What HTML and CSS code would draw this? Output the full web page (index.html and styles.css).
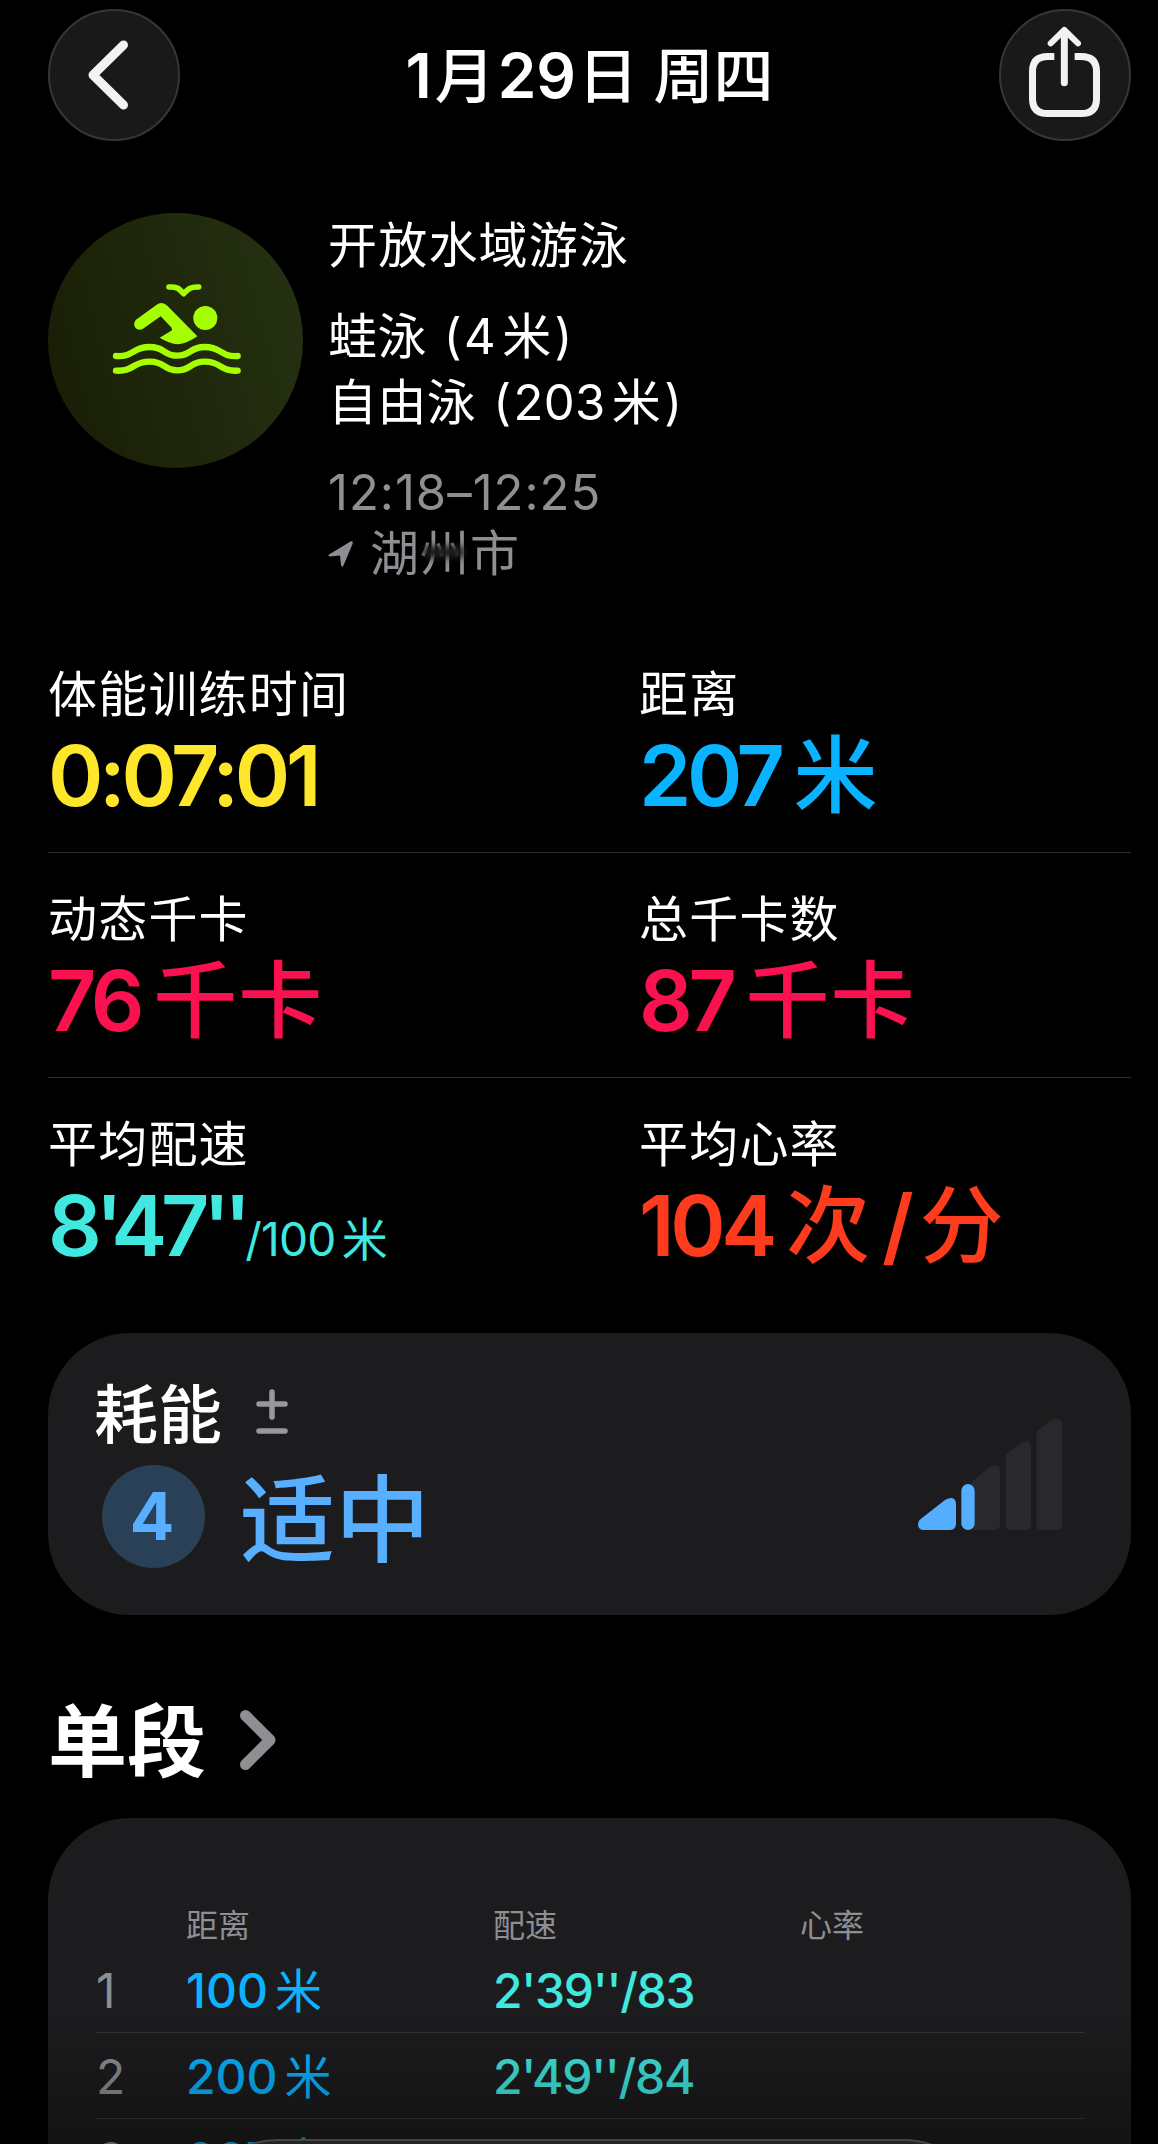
FILE: index.html
```html
<!DOCTYPE html>
<html lang="zh-CN">
<head>
  <meta charset="UTF-8">
  <title>体能训练</title>
  <meta name="viewport" content="width=device-width, initial-scale=1.0">
  <link rel="stylesheet" href="styles.css">
</head>
<body>
  <header class="topbar">
    <button class="round-btn" aria-label="返回">
      <svg viewBox="0 0 132 132"><path d="M75.500 36 L45 66 L75.500 96" stroke-width="9"/></svg>
    </button>
    <h1>1<span class="month">月</span>29<span class="day">日</span> <span>周四</span></h1>
    <button class="round-btn" aria-label="共享">
      <svg viewBox="117 27 396 396">
        <path class="butt" d="M283 169.500 H264 Q217.500 169.500 217.500 214 V296 Q217.500 340.500 264 340.500 H363 Q409.500 340.500 409.500 296 V214 Q409.500 169.500 363 169.500 H344" stroke-width="21"/>
        <path d="M313 95 V248" stroke-width="21"/>
        <path d="M272 130 L313 90 L354 130" stroke-width="18"/>
      </svg>
    </button>
  </header>

  <section class="summary">
    <div class="activity-icon">
      <svg viewBox="-126 -141 765 765">
        <!-- bird -->
        <path class="line" d="M237 81 C262 80 266 85 281 101 C296 85 302 80 326 81" stroke-width="17"/>
        <!-- swimmer -->
        <circle cx="346" cy="174" r="36"/>
        <path d="M138 179 L199 135 Q216 122 232 137 L322 229 Q291 251 264 253 Q238 251 209 233 L246 211 L245 203 L212 169 L158 207 C142 216 123 196 138 179 Z"/>
        <!-- waves -->
        <path class="line" d="M78 288 C135 291 125 261 179 261 C226 261 220 287 261 287 C306 287 297 261 344 261 C397 261 388 291 443 288" stroke-width="19"/>
        <path class="line" d="M78 332 C135 335 125 305 179 305 C226 305 220 331 261 331 C306 331 297 305 344 305 C397 305 388 335 443 332" stroke-width="19"/>
      </svg>
    </div>
    <div class="summary-text">
      <p class="kind">开放水域游泳</p>
      <p class="stroke">蛙泳<span class="paren">(</span>4<span class="unit">米</span><span class="close">)</span></p>
      <p class="stroke">自由泳<span class="paren">(</span>203<span class="unit">米</span><span class="close">)</span></p>
      <p class="time">12:18–12:25</p>
      <p class="place">
        <svg viewBox="0 0 24 26"><path d="M0.500 13.500 L22 0.500 Q25 -0.500 24 3 L15 24.500 Q13.500 27 12.500 24 L11.500 14.500 L1.500 15.500 Q-1 15 0.500 13.500 Z"/></svg>
        <span>湖<span class="worn">州</span>市</span>
      </p>
    </div>
  </section>

  <section class="stats">
    <div class="stat-row">
      <div class="stat"><h3>体能训练时间</h3><p class="value yellow">0:07:01</p></div>
      <div class="stat"><h3>距离</h3><p class="value blue">207<span class="cjk">米</span></p></div>
    </div>
    <div class="stat-row">
      <div class="stat"><h3>动态千卡</h3><p class="value pink">76<span class="cjk">千卡</span></p></div>
      <div class="stat"><h3>总千卡数</h3><p class="value pink">87<span class="cjk">千卡</span></p></div>
    </div>
    <div class="stat-row">
      <div class="stat"><h3>平均配速</h3><p class="value pace cyan">8'47''<span class="per">/100<span class="unit">米</span></span></p></div>
      <div class="stat"><h3>平均心率</h3><p class="value red">104<span class="cjk">次</span><span class="slash">/</span><span class="cjk">分</span></p></div>
    </div>
  </section>

  <section class="card effort">
    <div>
      <div class="effort-head">
        <h3>耗能</h3>
        <svg viewBox="0 0 32 45"><path d="M3 15 H29 M16 3 V28 M3 42 H29"/></svg>
      </div>
      <div class="effort-level">
        <span class="badge">4</span>
        <strong>适中</strong>
      </div>
    </div>
    <svg class="effort-chart" viewBox="174 117 432 333">
      <g class="off">
        <path d="M335 305 L388 262 Q420 245 420 275 V435 Q420 450 405 450 H335 Z"/>
        <path d="M437 232 Q437 224 444 219 L482 190 Q513 174 513 205 V435 Q513 450 498 450 H452 Q437 450 437 435 Z"/>
        <path d="M530 160 Q530 153 537 148 L574 121 Q606 106 606 135 V435 Q606 450 591 450 H545 Q530 450 530 435 Z"/>
      </g>
      <g class="on">
        <path d="M182 417 L256 359 Q288 344 288 374 V430 Q288 450 268 450 H192 Q174 450 174 432 Q174 423 182 417 Z"/>
        <rect x="304" y="312" width="40" height="138" rx="20"/>
      </g>
    </svg>
  </section>

  <h2 class="section-title"><span>单段</span>
    <svg viewBox="0 0 36 60"><path d="M5.500 5.500 L30 30 L5.500 54.500"/></svg>
  </h2>

  <section class="card splits">
    <div class="split head"><span></span><span>距离</span><span>配速</span><span>心率</span></div>
    <div class="split"><span class="num">1</span><span class="blue">100<span class="unit">米</span></span><span class="cyan">2'39''/83</span><span></span></div>
    <div class="split"><span class="num">2</span><span class="blue">200<span class="unit">米</span></span><span class="cyan">2'49''/84</span><span></span></div>
    <div class="split last"><span class="num">3</span><span class="blue">207<span class="unit">米</span></span><span></span><span></span></div>
  </section>

  <div class="fade"></div>
  <nav class="tabbar"></nav>
</body>
</html>
```
FILE: styles.css
```css
:root {
  --card: #1c1c1e;
  --gray: #8e8e93;
  --line: #2b2b2d;
  --lime: #a6ff00;
  --yellow: #fee62b;
  --blue: #0ab3ff;
  --pink: #fa114f;
  --cyan: #40e8e0;
  --red: #ff3b1d;
  --effort: #58aeff;
}

* {
  box-sizing: border-box;
}

html {
  height: 2144px;
  overflow: hidden;
  background: #000;
}

body {
  margin: 0;
  height: 2144px;
  padding: 9px 27px 0 48px;
  overflow: hidden;
  position: relative;
  background: #000;
  color: #fff;
  font-family: Inter, "Noto Sans CJK SC", sans-serif;
}

h1, h2, h3, p {
  margin: 0;
}

svg {
  display: block;
}

.topbar {
  display: flex;
  justify-content: space-between;
  height: 132px;
}

.topbar h1 {
  font-size: 62px;
  font-weight: 600;
  line-height: 133px;
  white-space: nowrap;
}

.topbar h1 span {
  font-size: 60px;
  font-weight: 500;
}

.topbar h1 .month {
  margin: 0 3px;
}

.topbar h1 .day {
  margin-left: 2px;
}

.round-btn {
  width: 132px;
  height: 132px;
  padding: 0;
  border: 2px solid #363636;
  border-radius: 50%;
  background: #191919;
}

.round-btn svg {
  width: 132px;
  height: 132px;
  margin: -2px;
  fill: none;
  stroke: #f2f2f2;
  stroke-linecap: round;
  stroke-linejoin: round;
}

.round-btn .butt {
  stroke-linecap: butt;
}

.summary {
  display: flex;
  gap: 25px;
  height: 487px;
  padding-top: 72px;
}

.activity-icon {
  width: 255px;
  height: 255px;
  border-radius: 50%;
  background: linear-gradient(75deg, #181d04, #263213);
}

.activity-icon svg {
  fill: var(--lime);
}

.activity-icon .line {
  fill: none;
  stroke: var(--lime);
  stroke-linecap: round;
  stroke-linejoin: round;
}

.summary-text {
  font-size: 49px;
  line-height: 66px;
  white-space: nowrap;
}

.kind {
  letter-spacing: 1.2px;
  margin-bottom: 25px;
}

.unit {
  margin-left: 6px;
}

.stroke {
  letter-spacing: 0.4px;
}

.paren {
  margin: 0 2px 0 17px;
}

.close {
  margin-left: 3px;
}

.time, .place {
  color: var(--gray);
  line-height: 61px;
}

.time {
  margin-top: 26px;
  letter-spacing: 1px;
}

.place {
  display: flex;
  align-items: center;
  gap: 17px;
  letter-spacing: 1px;
}

.place svg {
  width: 25px;
  height: 26px;
  fill: var(--gray);
}

.worn {
  position: relative;
}

.worn::after {
  content: "";
  position: absolute;
  left: 4px;
  top: 22px;
  width: 40px;
  height: 12px;
  background: #1c1c1d;
  filter: blur(3px);
}

.stat-row {
  display: flex;
  height: 225px;
  padding-top: 37px;
  border-bottom: 1px solid var(--line);
}

.stat-row:last-child {
  border: 0;
}

.stat {
  width: 591px;
  white-space: nowrap;
}

.stat:last-child {
  width: auto;
}

.stat h3 {
  font-size: 49px;
  font-weight: 400;
  line-height: 60px;
  letter-spacing: 1.2px;
}

.value {
  margin-top: 5px;
  font-size: 84px;
  font-weight: 600;
  line-height: 92px;
  letter-spacing: -4.3px;
}

.value.pace {
  letter-spacing: -6.3px;
}

.cjk {
  margin-left: 13px;
  font-weight: 500;
  letter-spacing: 1px;
}

.per {
  font-size: 46px;
  font-weight: 400;
  letter-spacing: -0.7px;
}

.slash {
  margin-left: 11px;
}

.slash + .cjk {
  margin-left: 10px;
}

.yellow { color: var(--yellow); }
.blue { color: var(--blue); }
.pink { color: var(--pink); }
.cyan { color: var(--cyan); }
.red { color: var(--red); }

.card {
  width: 1083px;
  border-radius: 82px;
  background: var(--card);
}

.effort {
  display: flex;
  justify-content: space-between;
  height: 282px;
  margin-top: 30px;
  padding: 46px 69px 0 46px;
}

.effort-head {
  display: flex;
  gap: 34px;
  height: 70px;
}

.effort-head h3 {
  font-size: 64px;
  font-weight: 450;
  line-height: 71px;
}

.effort-head svg {
  width: 32px;
  height: 45px;
  margin-top: 10px;
  fill: none;
  stroke: #98979e;
  stroke-width: 5.5;
  stroke-linecap: round;
}

.effort-level {
  display: flex;
  gap: 35px;
  margin: 16px 0 0 8px;
  color: var(--effort);
}

.badge {
  width: 103px;
  height: 103px;
  padding-right: 3px;
  border-radius: 50%;
  background: #2a4056;
  font-size: 66px;
  font-weight: 700;
  line-height: 103px;
  text-align: center;
}

.effort-level strong {
  font-size: 95px;
  font-weight: 500;
  line-height: 111px;
}

.effort-chart {
  width: 144px;
  height: 111px;
  margin-top: 40px;
}

.effort-chart .off { fill: #29292c; }
.effort-chart .on { fill: #54adff; }

.section-title {
  display: flex;
  align-items: center;
  gap: 34px;
  height: 90px;
  margin: 80px 0 33px;
  font-size: 79px;
  font-weight: 700;
  line-height: 90px;
}

.section-title span {
  padding-top: 4px;
}

.section-title svg {
  width: 36px;
  height: 60px;
  fill: none;
  stroke: var(--gray);
  stroke-width: 11;
  stroke-linecap: round;
  stroke-linejoin: round;
}

.splits {
  height: 326px;
  padding: 85px 47px 0 48px;
  border-radius: 82px 82px 0 0;
}

.split {
  display: grid;
  grid-template-columns: 90px 307px 307px 1fr;
  height: 86px;
  border-bottom: 1px solid #363638;
  font-size: 48px;
  line-height: 88px;
}

.split.head {
  height: 44px;
  border: 0;
  color: var(--gray);
  font-size: 32px;
  line-height: 46px;
}

.split.last {
  border: 0;
  line-height: 82px;
}

.split .num {
  color: var(--gray);
}

.split .blue, .split .cyan {
  font-weight: 500;
}

.split .cyan {
  letter-spacing: -1.3px;
}

.split .unit {
  margin-left: 7px;
  font-size: 47px;
  font-weight: 400;
}

/* content dims towards the bottom edge */
.fade {
  position: absolute;
  left: 0;
  right: 0;
  bottom: 0;
  height: 134px;
  background: linear-gradient(transparent, rgba(0, 0, 0, 0.32));
}

.tabbar {
  position: absolute;
  left: 188px;
  top: 2139px;
  width: 805px;
  height: 180px;
  border: 2px solid #464646;
  border-radius: 90px;
  background: #242424;
}
```
